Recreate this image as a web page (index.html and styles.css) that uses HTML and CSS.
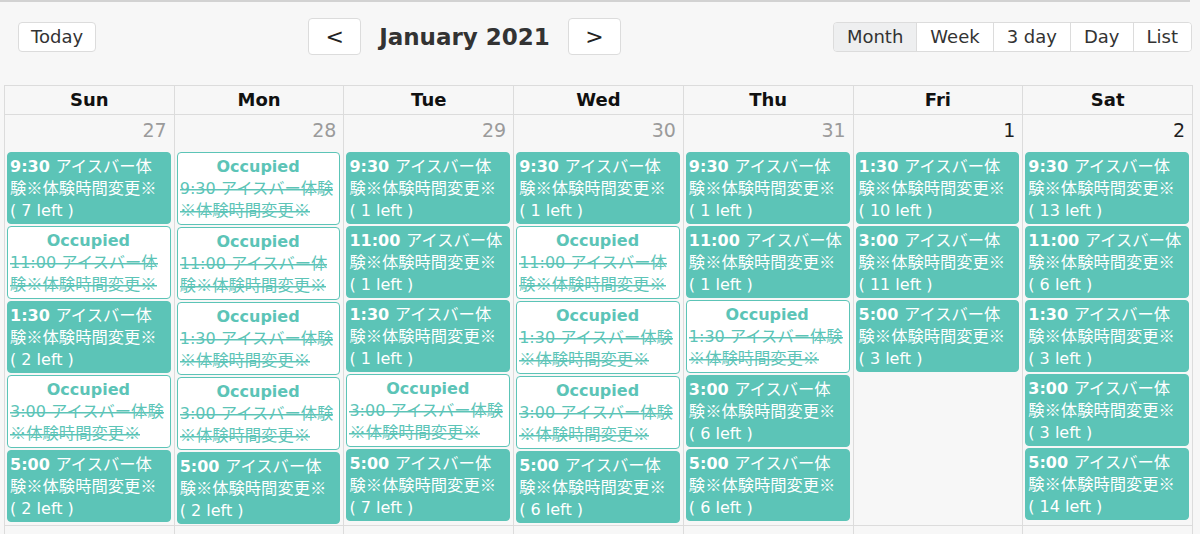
FILE: index.html
```html
<!DOCTYPE html>
<html lang="ja">
<head>
<meta charset="utf-8">
<title>Calendar</title>
<link rel="stylesheet" href="styles.css">
</head>
<body>
<div class="topline"></div>
<div class="toolbar">
  <button class="btn today">Today</button>
  <div class="center">
    <button class="btn nav">&lt;</button>
    <h2 class="title">January 2021</h2>
    <button class="btn nav">&gt;</button>
  </div>
  <div class="views">
    <button class="vbtn active">Month</button>
    <button class="vbtn">Week</button>
    <button class="vbtn">3 day</button>
    <button class="vbtn">Day</button>
    <button class="vbtn">List</button>
  </div>
</div>

<div class="cal">
  <div class="row head">
    <div class="hcell">Sun</div>
    <div class="hcell">Mon</div>
    <div class="hcell">Tue</div>
    <div class="hcell">Wed</div>
    <div class="hcell">Thu</div>
    <div class="hcell">Fri</div>
    <div class="hcell">Sat</div>
  </div>

  <div class="row week">
    <!-- Sun 27 -->
    <div class="day">
      <div class="num other">27</div>
      <div class="ev"><span class="t">9:30 </span><span class="jp">アイスバー体験※体験時間変更※</span><span class="left">( 7 left )</span></div>
      <div class="ev occ"><div class="label">Occupied</div><s><span class="tn">11:00 </span><span class="jp">アイスバー体験※体験時間変更※</span></s></div>
      <div class="ev"><span class="t">1:30 </span><span class="jp">アイスバー体験※体験時間変更※</span><span class="left">( 2 left )</span></div>
      <div class="ev occ"><div class="label">Occupied</div><s><span class="tn">3:00 </span><span class="jp">アイスバー体験※体験時間変更※</span></s></div>
      <div class="ev"><span class="t">5:00 </span><span class="jp">アイスバー体験※体験時間変更※</span><span class="left">( 2 left )</span></div>
    </div>
    <!-- Mon 28 -->
    <div class="day">
      <div class="num other">28</div>
      <div class="ev occ"><div class="label">Occupied</div><s><span class="tn">9:30 </span><span class="jp">アイスバー体験※体験時間変更※</span></s></div>
      <div class="ev occ"><div class="label">Occupied</div><s><span class="tn">11:00 </span><span class="jp">アイスバー体験※体験時間変更※</span></s></div>
      <div class="ev occ"><div class="label">Occupied</div><s><span class="tn">1:30 </span><span class="jp">アイスバー体験※体験時間変更※</span></s></div>
      <div class="ev occ"><div class="label">Occupied</div><s><span class="tn">3:00 </span><span class="jp">アイスバー体験※体験時間変更※</span></s></div>
      <div class="ev"><span class="t">5:00 </span><span class="jp">アイスバー体験※体験時間変更※</span><span class="left">( 2 left )</span></div>
    </div>
    <!-- Tue 29 -->
    <div class="day">
      <div class="num other">29</div>
      <div class="ev"><span class="t">9:30 </span><span class="jp">アイスバー体験※体験時間変更※</span><span class="left">( 1 left )</span></div>
      <div class="ev"><span class="t">11:00 </span><span class="jp">アイスバー体験※体験時間変更※</span><span class="left">( 1 left )</span></div>
      <div class="ev"><span class="t">1:30 </span><span class="jp">アイスバー体験※体験時間変更※</span><span class="left">( 1 left )</span></div>
      <div class="ev occ"><div class="label">Occupied</div><s><span class="tn">3:00 </span><span class="jp">アイスバー体験※体験時間変更※</span></s></div>
      <div class="ev"><span class="t">5:00 </span><span class="jp">アイスバー体験※体験時間変更※</span><span class="left">( 7 left )</span></div>
    </div>
    <!-- Wed 30 -->
    <div class="day">
      <div class="num other">30</div>
      <div class="ev"><span class="t">9:30 </span><span class="jp">アイスバー体験※体験時間変更※</span><span class="left">( 1 left )</span></div>
      <div class="ev occ"><div class="label">Occupied</div><s><span class="tn">11:00 </span><span class="jp">アイスバー体験※体験時間変更※</span></s></div>
      <div class="ev occ"><div class="label">Occupied</div><s><span class="tn">1:30 </span><span class="jp">アイスバー体験※体験時間変更※</span></s></div>
      <div class="ev occ"><div class="label">Occupied</div><s><span class="tn">3:00 </span><span class="jp">アイスバー体験※体験時間変更※</span></s></div>
      <div class="ev"><span class="t">5:00 </span><span class="jp">アイスバー体験※体験時間変更※</span><span class="left">( 6 left )</span></div>
    </div>
    <!-- Thu 31 -->
    <div class="day">
      <div class="num other">31</div>
      <div class="ev"><span class="t">9:30 </span><span class="jp">アイスバー体験※体験時間変更※</span><span class="left">( 1 left )</span></div>
      <div class="ev"><span class="t">11:00 </span><span class="jp">アイスバー体験※体験時間変更※</span><span class="left">( 1 left )</span></div>
      <div class="ev occ"><div class="label">Occupied</div><s><span class="tn">1:30 </span><span class="jp">アイスバー体験※体験時間変更※</span></s></div>
      <div class="ev"><span class="t">3:00 </span><span class="jp">アイスバー体験※体験時間変更※</span><span class="left">( 6 left )</span></div>
      <div class="ev"><span class="t">5:00 </span><span class="jp">アイスバー体験※体験時間変更※</span><span class="left">( 6 left )</span></div>
    </div>
    <!-- Fri 1 -->
    <div class="day">
      <div class="num">1</div>
      <div class="ev"><span class="t">1:30 </span><span class="jp">アイスバー体験※体験時間変更※</span><span class="left">( 10 left )</span></div>
      <div class="ev"><span class="t">3:00 </span><span class="jp">アイスバー体験※体験時間変更※</span><span class="left">( 11 left )</span></div>
      <div class="ev"><span class="t">5:00 </span><span class="jp">アイスバー体験※体験時間変更※</span><span class="left">( 3 left )</span></div>
    </div>
    <!-- Sat 2 -->
    <div class="day">
      <div class="num">2</div>
      <div class="ev"><span class="t">9:30 </span><span class="jp">アイスバー体験※体験時間変更※</span><span class="left">( 13 left )</span></div>
      <div class="ev"><span class="t">11:00 </span><span class="jp">アイスバー体験※体験時間変更※</span><span class="left">( 6 left )</span></div>
      <div class="ev"><span class="t">1:30 </span><span class="jp">アイスバー体験※体験時間変更※</span><span class="left">( 3 left )</span></div>
      <div class="ev"><span class="t">3:00 </span><span class="jp">アイスバー体験※体験時間変更※</span><span class="left">( 3 left )</span></div>
      <div class="ev"><span class="t">5:00 </span><span class="jp">アイスバー体験※体験時間変更※</span><span class="left">( 14 left )</span></div>
    </div>
  </div>

  <div class="row week">
    <div class="day"><div class="num">3</div></div>
    <div class="day"><div class="num">4</div></div>
    <div class="day"><div class="num">5</div></div>
    <div class="day"><div class="num">6</div></div>
    <div class="day"><div class="num">7</div></div>
    <div class="day"><div class="num">8</div></div>
    <div class="day"><div class="num">9</div></div>
  </div>
</div>
</body>
</html>
```

FILE: styles.css
```css
html, body {
  margin: 0;
  padding: 0;
}

body {
  background: #f7f7f7;
  font-family: "DejaVu Sans", "Noto Sans CJK JP", sans-serif;
  color: #333;
  overflow: hidden;
}

.topline {
  width: 1190px;
  height: 2px;
  background: #d2d2d2;
}

/* ---------- toolbar ---------- */
.toolbar {
  display: flex;
  justify-content: space-between;
  align-items: center;
  padding: 16px 8px 0 18px;
}

.btn {
  font-family: inherit;
  background: #fff;
  border: 1px solid #dcdcdc;
  border-radius: 4px;
  color: #333;
  cursor: pointer;
}

.today {
  height: 30px;
  padding: 0 12px;
  font-size: 18px;
}

.center {
  display: flex;
  align-items: center;
  gap: 18px;
}

.nav {
  width: 53px;
  height: 37px;
  padding: 0;
  font-size: 22px;
  color: #222;
}

.title {
  margin: 0;
  font-size: 23px;
  font-weight: bold;
  color: #333;
}

.views {
  display: flex;
  border: 1px solid #dcdcdc;
  border-radius: 4px;
  overflow: hidden;
}

.vbtn {
  height: 28px;
  padding: 0 13px;
  font-family: inherit;
  font-size: 18px;
  color: #333;
  background: #fff;
  border: 0;
  border-left: 1px solid #dcdcdc;
}

.vbtn:first-child {
  border-left: 0;
}

.vbtn.active {
  background: #eeeff0;
}

/* ---------- calendar grid ---------- */
.cal {
  margin: 30px 7px 0 4px;
  border-top: 1px solid #dcdcdc;
  border-left: 1px solid #dcdcdc;
}

.row {
  display: grid;
  grid-template-columns: repeat(7, minmax(0, 1fr));
}

.hcell {
  border-right: 1px solid #dcdcdc;
  border-bottom: 1px solid #dcdcdc;
  text-align: center;
  font-size: 18px;
  font-weight: bold;
  line-height: 28px;
  color: #111;
}

.day {
  border-right: 1px solid #dcdcdc;
  border-bottom: 1px solid #dcdcdc;
  padding-bottom: 1px;
  min-width: 0;
}

.num {
  box-sizing: border-box;
  height: 35px;
  padding: 3px 7px 0;
  text-align: right;
  font-size: 19px;
  line-height: 24px;
  color: #1f1f1f;
}

.num.other {
  color: #9b9b9b;
}

/* ---------- events ---------- */
.ev {
  margin: 2px 3px 0 2px;
  padding: 3px 3px 1px 2px;
  border: 1px solid #5cc4b7;
  border-radius: 4px;
  background: #5cc4b7;
  color: #fff;
  font-size: 16px;
  line-height: 22px;
}

.ev .t {
  font-weight: bold;
}

.ev .jp {
  font-family: "Noto Sans CJK JP", sans-serif;
  font-size: 16.3px;
  line-height: 16px;
}

.ev .left {
  display: block;
}

.ev.occ {
  background: #fff;
  color: #5cc4b7;
  padding-bottom: 2px;
}

.ev.occ .label {
  text-align: center;
  font-weight: bold;
}

/* strike drawn on the <s> box so one line runs through Latin and CJK alike */
.ev.occ s {
  text-decoration: none;
  background-image: linear-gradient(#5cc4b7, #5cc4b7);
  background-repeat: no-repeat;
  background-size: 100% 1.5px;
  background-position: 0 58%;
  -webkit-box-decoration-break: clone;
  box-decoration-break: clone;
}
```
